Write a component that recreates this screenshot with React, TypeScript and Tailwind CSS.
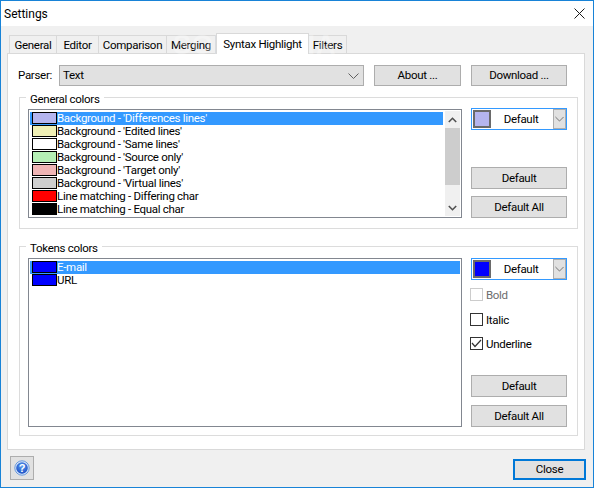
import type { ReactNode } from "react";

const generalRows = [
  { color: "bg-[#b5b5ef]", label: "Background - 'Differences lines'" },
  { color: "bg-[#efefb5]", label: "Background - 'Edited lines'" },
  { color: "bg-white", label: "Background - 'Same lines'" },
  { color: "bg-[#b5efb5]", label: "Background - 'Source only'" },
  { color: "bg-[#efb5b5]", label: "Background - 'Target only'" },
  { color: "bg-[#cecece]", label: "Background - 'Virtual lines'" },
  { color: "bg-[#ff0000]", label: "Line matching - Differing char" },
  { color: "bg-black", label: "Line matching - Equal char" },
];

const tokenRows = [
  { color: "bg-[#0000ff]", label: "E-mail" },
  { color: "bg-[#0000ff]", label: "URL" },
];

const tabs = [
  { label: "General", width: "w-[48px]" },
  { label: "Editor", width: "w-[42px]" },
  { label: "Comparison", width: "w-[68px]" },
  { label: "Merging", width: "w-[49px]" },
  { label: "Syntax Highlight", width: "w-[93px]", active: true },
  { label: "Filters", width: "w-[38px]" },
];

function Chevron({ className = "" }: { className?: string }) {
  return (
    <svg width="11" height="6" viewBox="0 0 11 6" fill="none" className={className}>
      <path d="M0.5 0.5 L5.5 5.5 L10.5 0.5" stroke="#606060" strokeWidth="1" />
    </svg>
  );
}

function Button({ children, className = "" }: { children: ReactNode; className?: string }) {
  return (
    <button className={"h-[22px] w-[96px] border border-[#adadad] bg-[#e1e1e1] flex items-center justify-center pt-px " + className}>
      {children}
    </button>
  );
}

function ColorCombo({ color }: { color: string }) {
  return (
    <div className="h-[22px] w-[96px] border border-[#3399ff] bg-white flex items-center pl-[1px]">
      <div className={"w-[18px] h-[18px] border-2 border-[#6a6a6a] " + color} />
      <span className="flex-1 text-center pt-px pr-[2px]">Default</span>
      <div className="w-[13px] h-[20px] bg-[#e1e1e1] border border-[#adadad] flex items-center justify-center">
        <Chevron className="w-[9px]" />
      </div>
    </div>
  );
}

function ListRow({ color, label, selected }: { color: string; label: string; selected?: boolean }) {
  return (
    <div className={"h-[13px] flex items-start pl-[2px] leading-[13px] " + (selected ? "bg-[#3399ff] text-white" : "")}>
      <div className={"w-[25px] h-[12px] border border-black shrink-0 " + color} />
      <span className="whitespace-nowrap">{label}</span>
    </div>
  );
}

function ScrollBar() {
  return (
    <div className="w-[15px] my-[1px] bg-[#f0f0f0] flex flex-col items-center shrink-0">
      <div className="h-[17px] flex items-center justify-center">
        <svg width="9" height="6" viewBox="0 0 9 6" fill="none">
          <path d="M0.8 5 L4.5 1.3 L8.2 5" stroke="#505050" strokeWidth="1.6" />
        </svg>
      </div>
      <div className="w-full h-[57px] bg-[#cdcdcd]" />
      <div className="flex-1" />
      <div className="h-[17px] flex items-center justify-center">
        <svg width="9" height="6" viewBox="0 0 9 6" fill="none">
          <path d="M0.8 1 L4.5 4.7 L8.2 1" stroke="#505050" strokeWidth="1.6" />
        </svg>
      </div>
    </div>
  );
}

function Group({ title, className, children }: { title: string; className: string; children: ReactNode }) {
  return (
    <div className={"relative border border-[#dcdcdc] flex pl-[8px] pt-[11px] " + className}>
      <span className="absolute -top-[7px] left-[6px] bg-white px-[4px] leading-[16px] whitespace-nowrap">{title}</span>
      {children}
    </div>
  );
}

function CheckRow({ label, checked, disabled, className = "" }: { label: string; checked?: boolean; disabled?: boolean; className?: string }) {
  return (
    <div className={"flex items-center gap-[3px] h-[13px] " + className}>
      <div className={"w-[13px] h-[13px] border bg-white flex items-center justify-center " + (disabled ? "border-[#cccccc]" : "border-[#333333]")}>
        {checked && (
          <svg width="11" height="9" viewBox="0 0 11 9" fill="none">
            <path d="M1 4 L4 7.5 L10 1" stroke="#333333" strokeWidth="1.2" />
          </svg>
        )}
      </div>
      <span className={"pt-[3px] " + (disabled ? "text-[#6d6d6d]" : "")}>{label}</span>
    </div>
  );
}

export default function App() {
  return (
    <div className="relative w-[594px] h-[488px] border border-[#1883d7] bg-[#f0f0f0] flex flex-col overflow-hidden text-[11.5px] tracking-[-0.3px] text-black font-['Roboto',sans-serif]">
      <div className="h-[25px] bg-white flex items-center justify-between pl-[3px] pr-[2px] shrink-0">
        <span className="text-[12px] pt-[1px] tracking-normal">Settings</span>
        <div className="w-[24px] h-[24px] flex items-center justify-center">
          <svg width="11" height="11" viewBox="0 0 11 11" fill="none">
            <path d="M0.5 0.5 L10.5 10.5 M10.5 0.5 L0.5 10.5" stroke="#1a1a1a" strokeWidth="1" />
          </svg>
        </div>
      </div>

      <div className="flex items-end h-[27px] pl-[8px] shrink-0">
        {tabs.map((t) =>
          t.active ? (
            <div key={t.label} className={"h-[21px] -mb-px z-10 bg-white border border-b-0 border-[#d9d9d9] flex items-start justify-center pt-[2px] whitespace-nowrap " + t.width}>
              {t.label}
            </div>
          ) : (
            <div key={t.label} className={"h-[18px] bg-[#f0f0f0] border border-l-0 first:border-l border-b-0 border-[#d9d9d9] flex items-center justify-center pt-[2px] " + t.width}>
              {t.label}
            </div>
          )
        )}
      </div>

      <div className="ml-[6px] w-[578px] h-[397px] bg-white border border-[#d9d9d9] pt-[11px] pl-[11px] shrink-0">
        <div className="flex items-center h-[21px]">
          <span className="w-[40px] -ml-px mr-px pt-px">Parser:</span>
          <div className="w-[305px] h-[21px] border border-[#adadad] bg-[#e1e1e1] flex items-center justify-between pl-[3px] pr-[4px]">
            <span className="pt-px">Text</span>
            <Chevron />
          </div>
          <Button className="ml-[10px] !w-[87px] !h-[21px]">About ...</Button>
          <Button className="ml-[10px] !h-[21px]">Download ...</Button>
        </div>

        <Group title="General colors" className="mt-[11px] w-[559px] h-[132px]">
          <div className="w-[434px] h-[109px] border border-[#828790] bg-white flex justify-between pl-[1px] pr-[1px]">
            <div className="w-[413px] pt-[2px]">
              {generalRows.map((r, i) => (
                <ListRow key={r.label} color={r.color} label={r.label} selected={i === 0} />
              ))}
            </div>
            <ScrollBar />
          </div>
          <div className="ml-[9px] -mt-[1px] flex flex-col">
            <ColorCombo color="bg-[#b5b5ef]" />
            <Button className="mt-[37px]">Default</Button>
            <Button className="mt-[7px]">Default All</Button>
          </div>
        </Group>

        <Group title="Tokens colors" className="mt-[17px] w-[559px] h-[190px]">
          <div className="w-[434px] h-[169px] border border-[#828790] bg-white px-[1px] pt-[2px]">
            {tokenRows.map((r, i) => (
              <ListRow key={r.label} color={r.color} label={r.label} selected={i === 0} />
            ))}
          </div>
          <div className="ml-[9px] flex flex-col">
            <ColorCombo color="bg-[#0000ff]" />
            <CheckRow label="Bold" disabled className="mt-[8px] -ml-px" />
            <CheckRow label="Italic" className="mt-[12px] -ml-px" />
            <CheckRow label="Underline" checked className="mt-[11px] -ml-px" />
            <Button className="mt-[25px]">Default</Button>
            <Button className="mt-[8px]">Default All</Button>
          </div>
        </Group>
      </div>

      <div className="flex justify-between pl-[9px] pr-[7px] pt-[6px]">
        <div className="w-[24px] h-[24px] border border-[#adadad] bg-[#e1e1e1] flex items-center justify-center">
          <svg width="16" height="16" viewBox="0 0 16 16">
            <defs>
              <radialGradient id="helpFill" cx="50%" cy="35%" r="65%">
                <stop offset="0%" stopColor="#5b9cf0" />
                <stop offset="100%" stopColor="#1b4fc4" />
              </radialGradient>
            </defs>
            <circle cx="8" cy="8" r="7.2" fill="#dbe7f8" stroke="#4a86d8" strokeWidth="0.8" />
            <circle cx="8" cy="8" r="5.8" fill="url(#helpFill)" />
            <text x="8" y="12" textAnchor="middle" fontSize="11" fontWeight="700" fill="white" fontFamily="Liberation Sans">?</text>
          </svg>
        </div>
        <button className="mt-[3px] w-[73px] h-[21px] border-2 border-[#0078d7] bg-[#e1e1e1] flex items-center justify-center pt-px">Close</button>
      </div>

      <span className="absolute left-[172px] top-[24px] text-[27px] font-bold tracking-[1px] text-white/30 pointer-events-none font-['Liberation_Sans',sans-serif]">SOFTPEDIA</span>
    </div>
  );
}
